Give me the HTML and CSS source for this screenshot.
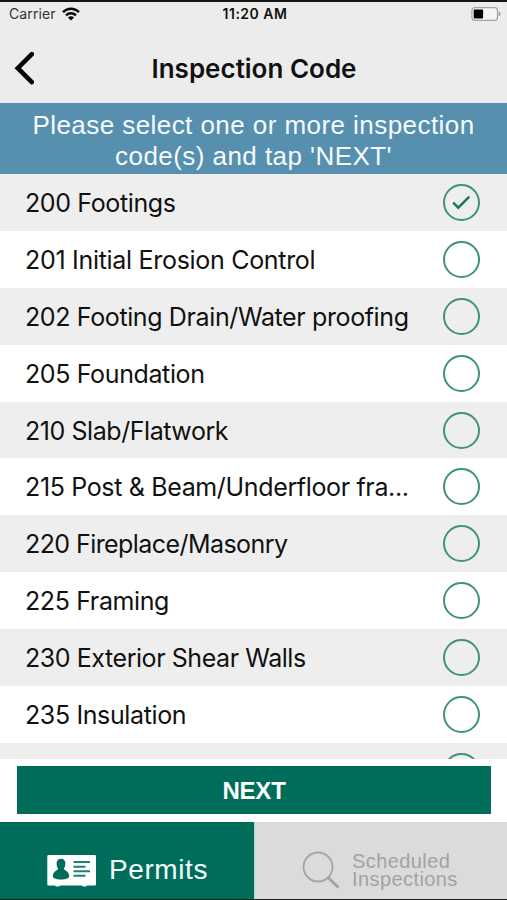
FILE: index.html
```html
<!DOCTYPE html>
<html lang="en">
<head>
<meta charset="utf-8">
<title>Inspection Code</title>
<link rel="stylesheet" href="styles.css">
</head>
<body>
<div class="screen">
  <div class="status">
    <div class="carrier"><span>Carrier</span>
      <svg class="wifi" width="18" height="14" viewBox="0 0 18 14"><g fill="none" stroke="#0a0a0a" stroke-width="2.4"><path d="M1 5.2C5.4.6 12.6.6 17 5.2"/><path d="M4 8.400c2.800-2.800 7.200-2.800 10 0"/></g><path d="M5.900 10.500c1.800-1.600 4.400-1.600 6.200 0L9 13.600z" fill="#0a0a0a"/></svg>
    </div>
    <div class="time">11:20 AM</div>
    <svg class="battery" width="30" height="14" viewBox="0 0 30 14"><rect x=".9" y=".7" width="25.6" height="12.6" rx="3" fill="#f5f5f5" stroke="#a3a3a3" stroke-width="1.2"/><rect x="2.7" y="2.6" width="9.4" height="8.8" rx="1" fill="#000"/><path d="M27.600 4.600c2.600.7 2.600 4.100 0 4.800z" fill="#a3a3a3"/></svg>
  </div>
  <header class="nav">
    <svg class="back" width="22" height="36" viewBox="0 0 22 36"><path d="M19.800 4.200 5.800 18.200 19.800 32.200" fill="none" stroke="#050505" stroke-width="4.600" stroke-linecap="round" stroke-linejoin="miter"/></svg>
    <h1>Inspection Code</h1>
  </header>
  <div class="banner"><div>Please select one or more inspection</div><div>code(s) and tap 'NEXT'</div></div>
  <ul class="codes">
    <li><span>200 Footings</span><i class="radio"><svg width="19" height="15" viewBox="0 0 19 15"><path d="M1.200 7.600 6.300 12.700 17.300 1.700" fill="none" stroke="#19785e" stroke-width="2.400"/></svg></i></li>
    <li><span class="wide">201 Initial Erosion Control</span><i class="radio"></i></li>
    <li><span>202 Footing Drain/Water proofing</span><i class="radio"></i></li>
    <li><span>205 Foundation</span><i class="radio"></i></li>
    <li><span class="snug">210 Slab/Flatwork</span><i class="radio"></i></li>
    <li><span class="mid">215 Post &amp; Beam/Underfloor fra...</span><i class="radio"></i></li>
    <li><span class="tight">220 Fireplace/Masonry</span><i class="radio"></i></li>
    <li><span>225 Framing</span><i class="radio"></i></li>
    <li><span class="snug">230 Exterior Shear Walls</span><i class="radio"></i></li>
    <li><span>235 Insulation</span><i class="radio"></i></li>
    <li><span></span><i class="radio"></i></li>
  </ul>
  <div class="action"><button class="next">NEXT</button></div>
  <nav class="tabs">
    <div class="tab active">
      <svg class="card" width="50" height="33" viewBox="0 0 50 33"><path d="M1.500 1h46.300q1.200 0 1.200 1.200v28q0 1.200-1.200 1.200H40l-1 1h-3l-1-1H13l-1 1H9l-1-1H1.500Q.3 31.400.3 30.200v-28Q.3 1 1.500 1z" fill="#fff"/><path d="M14 4.800c3 0 4.600 2 4.400 5.200-.1 2-.8 3.500-1.600 4.800.2 1.500 5.400 2.300 5.400 7.500 0 2-3.400 3.200-8.200 3.200s-8.200-1.200-8.200-3.200c0-5.200 5.200-6 5.400-7.500-.8-1.300-1.500-2.800-1.600-4.800-.2-3.200 1.400-5.200 4.400-5.200z" fill="#006d5b"/><path d="M26.500 8H43M26.500 12.700H38.500M26.500 17.300H43M26.500 21.800H38.500" stroke="#238070" stroke-width="1.900"/></svg>
      <span>Permits</span>
    </div>
    <div class="tab idle">
      <svg class="search" width="38" height="38" viewBox="0 0 38 38"><circle cx="16" cy="16" r="14.500" fill="none" stroke="#a5a5a5" stroke-width="1.800"/><path d="m26 26.500 10.500 10" stroke="#a0a0a0" stroke-width="2.800" fill="none"/></svg>
      <div class="label"><div>Scheduled</div><div>Inspections</div></div>
    </div>
  </nav>
</div>
</body>
</html>
```
FILE: styles.css
```css
* { box-sizing: border-box; }
body { margin: 0; background: #fff; }
.screen { width: 507px; height: 900px; display: flex; flex-direction: column; overflow: hidden; border-top: 2px solid #181416; border-bottom: 1px solid #222; font-family: Inter, "Liberation Sans", sans-serif; color: #111; }
.status { height: 24px; flex: none; background: #ececec; display: grid; grid-template-columns: 1fr auto 1fr; align-items: center; padding: 0 6px 1px 9px; }
.carrier { display: flex; align-items: center; gap: 6px; font-size: 14px; letter-spacing: .12px; color: #333; }
.time { font-size: 14px; font-weight: 600; letter-spacing: .5px; white-space: nowrap; }
.battery { justify-self: end; }
.nav { height: 77px; flex: none; background: #ececec; display: grid; grid-template-columns: 40px 1fr 40px; align-items: center; padding: 7px 0 0; }
.back { margin-left: 12px; }
h1 { margin: 0; padding: 2px 0 0 1px; text-align: center; font-size: 26px; line-height: 32px; font-weight: 600; white-space: nowrap; }
.banner { height: 71px; flex: none; background: #578fae; color: #f6fbff; font: 26px/31px "Liberation Sans", sans-serif; letter-spacing: .44px; text-align: center; padding-top: 7px; white-space: nowrap; }
.codes { list-style: none; margin: 0; padding: 0; height: 585px; flex: none; overflow: hidden; }
li { height: 56.9px; display: flex; align-items: center; justify-content: space-between; padding: 0 27px 0 25px; font-size: 25px; letter-spacing: -.38px; white-space: nowrap; }
li:nth-child(odd) { background: #eee; }
li span { padding-top: 1px; }
.wide { letter-spacing: -.3px; }
.mid { letter-spacing: -.35px; }
.snug { letter-spacing: -.44px; }
.tight { letter-spacing: -.57px; }
.radio { width: 37px; height: 37px; border: 2px solid #40937a; border-radius: 50%; display: flex; align-items: center; justify-content: center; flex: none; }
.action { height: 63px; flex: none; padding: 7px 16px 8px 17px; background: #fff; }
.next { width: 100%; height: 48px; border: 0; padding: 2px 0 0; background: #006d5b; color: #fff; font: bold 24px "Liberation Sans", sans-serif; letter-spacing: -.2px; }
.tabs { flex: 1; display: grid; grid-template-columns: 254px 1fr; font-family: "Liberation Sans", sans-serif; }
.tab { display: flex; align-items: center; }
.active { background: #006d5b; color: #f4fffc; padding: 19px 0 0 47px; gap: 12px; font-size: 28px; letter-spacing: .6px; }
.idle { background: #dbdbdb; border-left: 1px solid #b4d6cf; color: #a3a3a3; padding: 18px 0 0 47px; gap: 12px; font-size: 20px; line-height: 18px; letter-spacing: .42px; }
```
